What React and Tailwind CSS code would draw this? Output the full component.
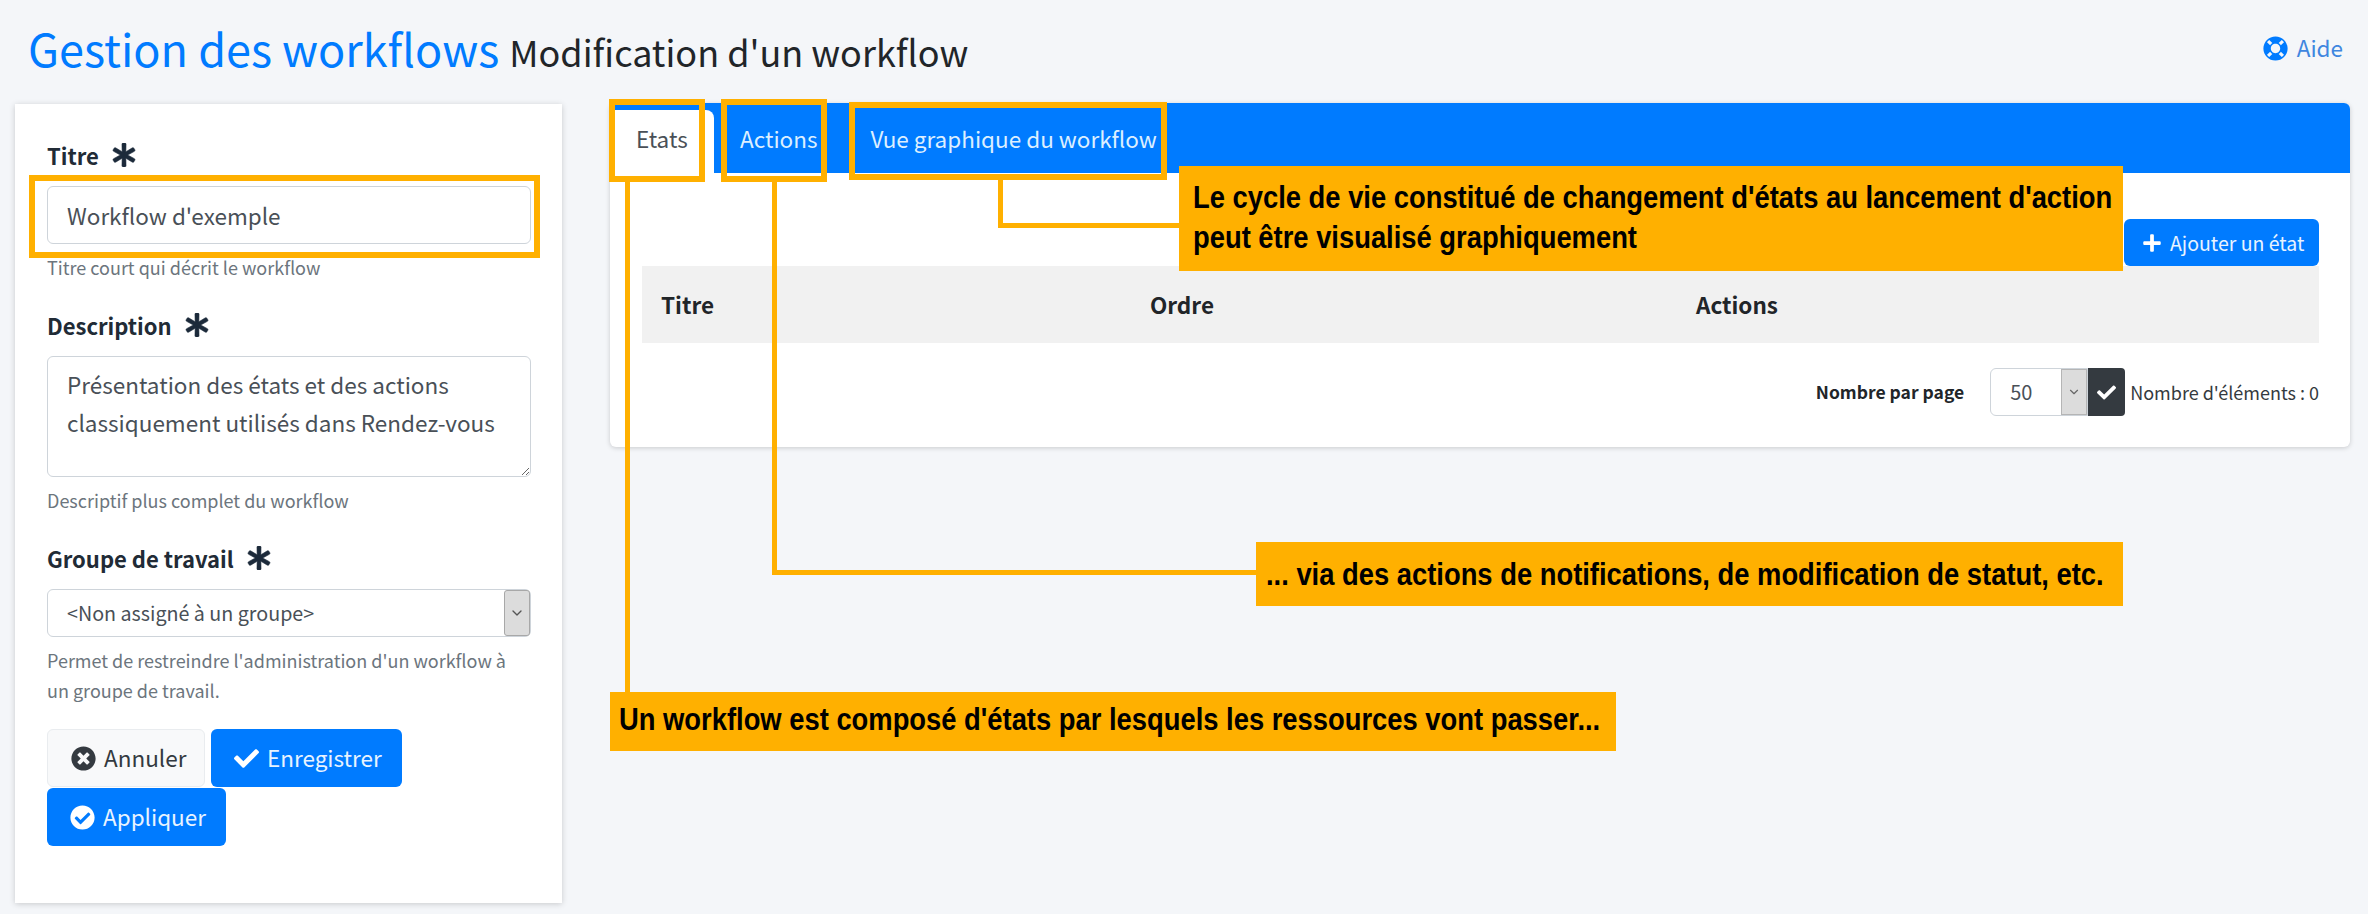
import React from 'react'
import { FaAsterisk, FaCheck, FaCheckCircle, FaLifeRing, FaPlus, FaTimesCircle } from 'react-icons/fa'
import { ChevronDown } from 'lucide-react'

const font = { fontFamily: '"Noto Sans CJK SC", "Noto Sans", sans-serif' }
const calloutFont = { fontFamily: '"Liberation Sans", Arial, sans-serif' }

const FieldLabel = ({ children }) => (
  <label className="flex items-center gap-[13px] h-[34px] text-[22px] leading-[34px] font-bold text-[#212b36]">
    {children}
    <FaAsterisk className="w-[24px] h-[24px] text-[#1c2a3a] stroke-current stroke-[12px]" />
  </label>
)

const Help = ({ children }) => (
  <p className="mt-[8px] text-[18px] leading-[30px] text-[#6c757d]">{children}</p>
)

const Tab = ({ className, children }) => (
  <div className={`flex items-center h-[63px] pb-[6px] text-[22.5px] ${className}`}>{children}</div>
)

export default function App() {
  return (
    <div className="relative w-full h-[914px] overflow-hidden bg-[#f4f6f9]" style={font}>
      {/* Header */}
      <div className="flex items-center justify-between h-[104px] pl-[28px] pr-[25px] pb-[8px]">
        <div className="flex items-baseline gap-[10px]">
          <h1 className="text-[45px] leading-[64px] text-[#007bff]">Gestion des workflows</h1>
          <span className="text-[36px] leading-[50px] text-[#212529]">Modification d'un workflow</span>
        </div>
        <div className="flex items-center gap-[9px] text-[22.5px] text-[#3f86e0]">
          <FaLifeRing className="w-[25px] h-[25px] text-[#007bff]" />
          Aide
        </div>
      </div>

      <div className="flex gap-[48px] pl-[15px] pr-[18px]">
        {/* Form */}
        <div className="w-[547px] h-[799px] shrink-0 bg-white shadow-[0_1px_6px_rgba(0,0,0,0.18)] pt-[34px] pl-[32px] pr-[31px]">
          <FieldLabel>Titre</FieldLabel>
          <input
            readOnly
            value="Workflow d'exemple"
            className="block w-full h-[58px] mt-[14px] px-[19px] text-[22.5px] text-[#495057] bg-white border border-[#ced4da] rounded-[6px] outline-none"
          />
          <Help>Titre court qui décrit le workflow</Help>

          <div className="mt-[26px]">
            <FieldLabel>Description</FieldLabel>
          </div>
          <textarea
            readOnly
            value={"Présentation des états et des actions classiquement utilisés dans Rendez-vous"}
            className="block w-full h-[121px] mt-[14px] px-[19px] py-[8px] text-[22.5px] leading-[38px] text-[#495057] bg-white border border-[#ced4da] rounded-[6px] outline-none"
          />
          <Help>Descriptif plus complet du workflow</Help>

          <div className="mt-[26px]">
            <FieldLabel>Groupe de travail</FieldLabel>
          </div>
          <div className="flex items-center justify-between h-[48px] mt-[14px] pl-[19px] bg-white border border-[#ced4da] rounded-[6px] text-[19.7px] text-[#495057]">
            <span>&lt;Non assigné à un groupe&gt;</span>
            <span className="flex items-center justify-center w-[26px] h-full bg-[#dcdcdc] border border-[#a8a8a8] rounded-[3px]">
              <ChevronDown className="w-[16px] h-[16px] text-[#555555]" />
            </span>
          </div>
          <Help>
            Permet de restreindre l'administration d'un workflow à
            <br />
            un groupe de travail.
          </Help>

          <div className="flex flex-wrap w-[370px] mt-[24px] text-[22.5px]">
            <button className="flex items-center gap-[8px] h-[58px] w-[158px] pl-[23px] bg-[#f8f9fa] border border-[#e9ecef] rounded-[6px] text-[#343a40]">
              <FaTimesCircle className="w-[25px] h-[25px]" />
              Annuler
            </button>
            <button className="flex items-center gap-[8px] h-[58px] w-[191px] ml-[6px] pl-[23px] bg-[#007bff] rounded-[6px] text-[#e8f3ff]">
              <FaCheck className="w-[25px] h-[25px] text-white" />
              Enregistrer
            </button>
            <button className="flex items-center gap-[8px] h-[58px] w-[179px] mt-px pl-[23px] bg-[#007bff] rounded-[6px] text-[#e8f3ff]">
              <FaCheckCircle className="w-[25px] h-[25px] text-white" />
              Appliquer
            </button>
          </div>
        </div>

        {/* Tabs card */}
        <div className="flex-1 h-[344px] -mt-px bg-white rounded-[6px] shadow-[0_1px_5px_rgba(0,0,0,0.18)] overflow-hidden">
          <div className="flex h-[70px] pt-[7px] pl-[3px] bg-[#007bff] text-[#dcefff]">
            <Tab className="w-[101px] pl-[23px] bg-white rounded-tr-[8px] text-[#495057]">Etats</Tab>
            <Tab className="pl-[26px]">Actions</Tab>
            <Tab className="pl-[53px]">Vue graphique du workflow</Tab>
          </div>

          <div className="pt-[46px] pl-[32px] pr-[31px]">
            <div className="flex justify-end">
              <button className="flex items-center gap-[8px] h-[47px] w-[195px] pl-[18px] bg-[#007bff] rounded-[6px] text-[19.5px] text-[#e8f3ff]">
                <FaPlus className="w-[20px] h-[20px] text-white" />
                Ajouter un état
              </button>
            </div>
            <div className="grid grid-cols-[489px_546px_1fr] items-center h-[77px] px-[19px] bg-[#f1f1f1] text-[22.5px] font-bold text-[#212529]">
              <div>Titre</div>
              <div>Ordre</div>
              <div>Actions</div>
            </div>
            <div className="flex items-center justify-end h-[48px] mt-[25px] text-[18px]">
              <span className="mr-[26px] text-[17.5px] font-bold text-[#212529]">Nombre par page</span>
              <div className="flex items-center w-[98px] h-full bg-white border border-[#ced4da] rounded-l-[6px] pl-[19px] text-[20px] text-[#495057]">
                <span className="flex-1">50</span>
                <span className="flex items-center justify-center w-[26px] h-full bg-[#dcdcdc] border border-[#b5b5b5]">
                  <ChevronDown className="w-[14px] h-[14px] text-[#666666]" />
                </span>
              </div>
              <button className="flex items-center justify-center w-[37px] h-full bg-[#343a40] rounded-r-[4px]">
                <FaCheck className="w-[19px] h-[19px] text-white" />
              </button>
              <span className="ml-[5px] text-[#343a40]">Nombre d'éléments : 0</span>
            </div>
          </div>
        </div>
      </div>

      {/* Annotations over the screenshot */}
      <div className="absolute left-[29px] top-[175px] w-[511px] h-[83px] border-[6px] border-[#ffb000]" />
      <div className="absolute left-[609px] top-[99px] w-[96px] h-[83px] border-[6px] border-[#ffb000]" />
      <div className="absolute left-[721px] top-[99px] w-[106px] h-[83px] border-[6px] border-[#ffb000]" />
      <div className="absolute left-[849px] top-[102px] w-[318px] h-[78px] border-[6px] border-[#ffb000]" />

      <div className="absolute left-[625px] top-[182px] w-[5px] h-[511px] bg-[#ffb000]" />
      <div className="absolute left-[772px] top-[182px] w-[5px] h-[393px] bg-[#ffb000]" />
      <div className="absolute left-[772px] top-[570px] w-[485px] h-[5px] bg-[#ffb000]" />
      <div className="absolute left-[998px] top-[180px] w-[5px] h-[48px] bg-[#ffb000]" />
      <div className="absolute left-[998px] top-[223px] w-[182px] h-[5px] bg-[#ffb000]" />

      <div
        className="absolute left-[1179px] top-[166px] w-[944px] h-[105px] pl-[14px] pt-[11px] bg-[#ffb000] text-[32px] leading-[40px] font-bold text-black"
        style={calloutFont}
      >
        <div className="origin-left scale-x-[0.855] whitespace-nowrap">Le cycle de vie constitué de changement d'états au lancement d'action</div>
        <div className="origin-left scale-x-[0.855] whitespace-nowrap">peut être visualisé graphiquement</div>
      </div>
      <div
        className="absolute left-[1256px] top-[542px] w-[867px] h-[64px] pl-[10px] flex items-center bg-[#ffb000] text-[32px] font-bold text-black"
        style={calloutFont}
      >
        <div className="origin-left scale-x-[0.855] whitespace-nowrap">... via des actions de notifications, de modification de statut, etc.</div>
      </div>
      <div
        className="absolute left-[610px] top-[692px] w-[1006px] h-[59px] pl-[9px] pb-[6px] flex items-center bg-[#ffb000] text-[32px] font-bold text-black"
        style={calloutFont}
      >
        <div className="origin-left scale-x-[0.855] whitespace-nowrap">Un workflow est composé d'états par lesquels les ressources vont passer...</div>
      </div>
    </div>
  )
}
